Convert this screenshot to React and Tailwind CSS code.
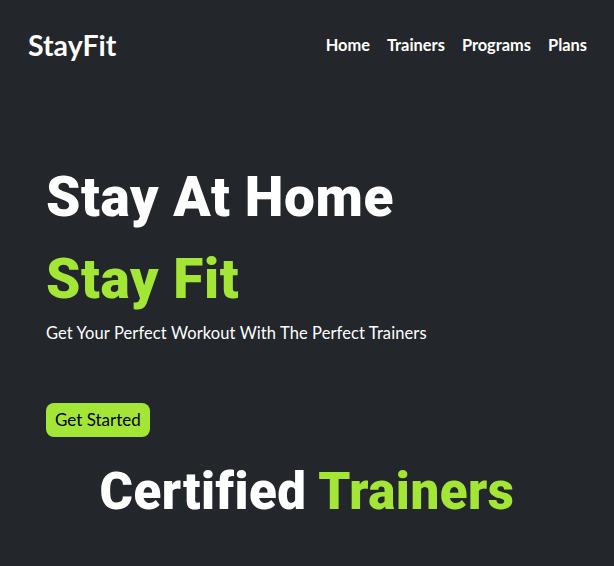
export default function App() {
  return (
    <div className="min-h-[566px] bg-[#23262b] text-white font-['Lato',sans-serif]">
      {/* Header */}
      <header className="flex items-center justify-between pl-[28px] pr-[27px] pt-[24px]">
        <div className="text-[28.5px] font-bold">StayFit</div>
        <nav className="flex items-center gap-[17px] text-[16.4px] font-bold">
          <a href="#">Home</a>
          <a href="#">Trainers</a>
          <a href="#">Programs</a>
          <a href="#">Plans</a>
        </nav>
      </header>

      {/* Hero */}
      <section className="px-[46px] pt-[89px]">
        <h1 className="font-['Roboto',sans-serif] text-[55px] font-black leading-[82px] tracking-[0.6px]">Stay At Home</h1>
        <h1 className="font-['Roboto',sans-serif] text-[55px] font-black leading-[82px] tracking-[0.6px] text-[#a3e635]">Stay Fit</h1>
        <p className="mt-[1px] text-[16.5px] tracking-[0.1px]">Get Your Perfect Workout With The Perfect Trainers</p>
        <button className="mt-[57px] rounded-lg bg-[#a3e635] px-[9px] py-[4.5px] text-[17px] text-black">
          Get Started
        </button>
      </section>

      {/* Trainers */}
      <h2 className="mt-[17px] text-center font-['Roboto',sans-serif] text-[51px] font-black tracking-[0.5px]">
        Certified <span className="text-[#a3e635]">Trainers</span>
      </h2>
    </div>
  );
}
